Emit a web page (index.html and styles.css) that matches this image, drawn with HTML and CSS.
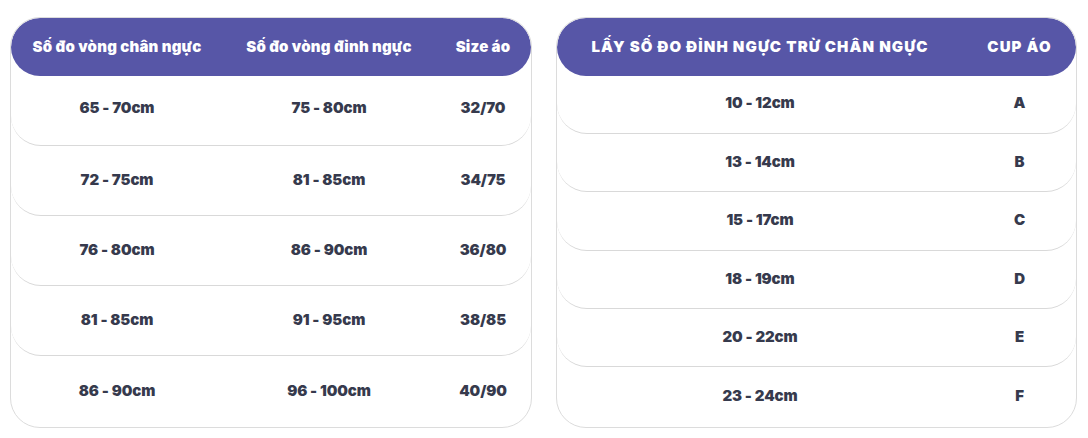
FILE: index.html
```html
<!DOCTYPE html>
<html lang="vi">
<head>
<meta charset="utf-8">
<title>Bảng size áo ngực</title>
<link rel="stylesheet" href="styles.css">
</head>
<body>
<div class="page">
  <section class="card card-left">
    <div class="head">
      <div class="cell">Số đo vòng chân ngực</div>
      <div class="cell">Số đo vòng đỉnh ngực</div>
      <div class="cell">Size áo</div>
    </div>
    <div class="rows">
      <div class="row"><div class="cell">65 - 70cm</div><div class="cell">75 - 80cm</div><div class="cell">32/70</div></div>
      <div class="row"><div class="cell">72 - 75cm</div><div class="cell">81 - 85cm</div><div class="cell">34/75</div></div>
      <div class="row"><div class="cell">76 - 80cm</div><div class="cell">86 - 90cm</div><div class="cell">36/80</div></div>
      <div class="row"><div class="cell">81 - 85cm</div><div class="cell">91 - 95cm</div><div class="cell">38/85</div></div>
      <div class="row"><div class="cell">86 - 90cm</div><div class="cell">96 - 100cm</div><div class="cell">40/90</div></div>
    </div>
  </section>
  <section class="card card-right">
    <div class="head">
      <div class="cell">LẤY SỐ ĐO ĐỈNH NGỰC TRỪ CHÂN NGỰC</div>
      <div class="cell">CUP ÁO</div>
    </div>
    <div class="rows">
      <div class="row"><div class="cell">10 - 12cm</div><div class="cell">A</div></div>
      <div class="row"><div class="cell">13 - 14cm</div><div class="cell">B</div></div>
      <div class="row"><div class="cell">15 - 17cm</div><div class="cell">C</div></div>
      <div class="row"><div class="cell">18 - 19cm</div><div class="cell">D</div></div>
      <div class="row"><div class="cell">20 - 22cm</div><div class="cell">E</div></div>
      <div class="row"><div class="cell">23 - 24cm</div><div class="cell">F</div></div>
    </div>
  </section>
</div>
</body>
</html>
```
FILE: styles.css
```css
html, body {
  margin: 0;
  padding: 0;
  background: #ffffff;
}
body {
  font-family: Inter, "Noto Sans", "DejaVu Sans", sans-serif;
  color: #363a4d;
}
.page {
  display: flex;
  gap: 24px;
  padding: 17px 0 0 10px;
}
.card {
  box-sizing: border-box;
  height: 411px;
  border: 1px solid #dcdcdc;
  border-radius: 30px;
  display: flex;
  flex-direction: column;
  overflow: hidden;
  background: #fff;
}
.card-left { width: 522px; }
.card-right { width: 521px; }
.head {
  box-sizing: border-box;
  height: 58px;
  flex: none;
  background: #5756a7;
  border-radius: 29px;
  color: #ffffff;
  display: grid;
  align-items: center;
  font-weight: 900;
  font-size: 15px;
  padding-bottom: 2px;
}
.rows {
  flex: 1;
  display: flex;
  flex-direction: column;
}
.row {
  box-sizing: border-box;
  flex: none;
  display: grid;
  align-items: center;
  border-bottom: 1px solid #d9d9d9;
  border-radius: 0 0 30px 30px;
  font-weight: 900;
  font-size: 15px;
  letter-spacing: -0.1px;
}
.row:last-child {
  border-bottom: none;
  flex: 1;
}
.cell {
  display: flex;
  justify-content: center;
  white-space: nowrap;
  min-width: 0;
}
.card-left .head {
  grid-template-columns: 212px 212px minmax(0, 1fr);
  letter-spacing: 0.2px;
}
.card-left .row {
  grid-template-columns: 212px 212px minmax(0, 1fr);
  height: 70px;
  padding-bottom: 3px;
}
.card-left .row:first-child {
  padding-bottom: 6px;
}
.card-right .head {
  grid-template-columns: 406px minmax(0, 1fr);
  letter-spacing: 1.1px;
}
.card-right .row {
  grid-template-columns: 406px minmax(0, 1fr);
  height: 58.2px;
  padding-bottom: 2px;
}
.card-right .row:first-child {
  padding-bottom: 4px;
}
```
